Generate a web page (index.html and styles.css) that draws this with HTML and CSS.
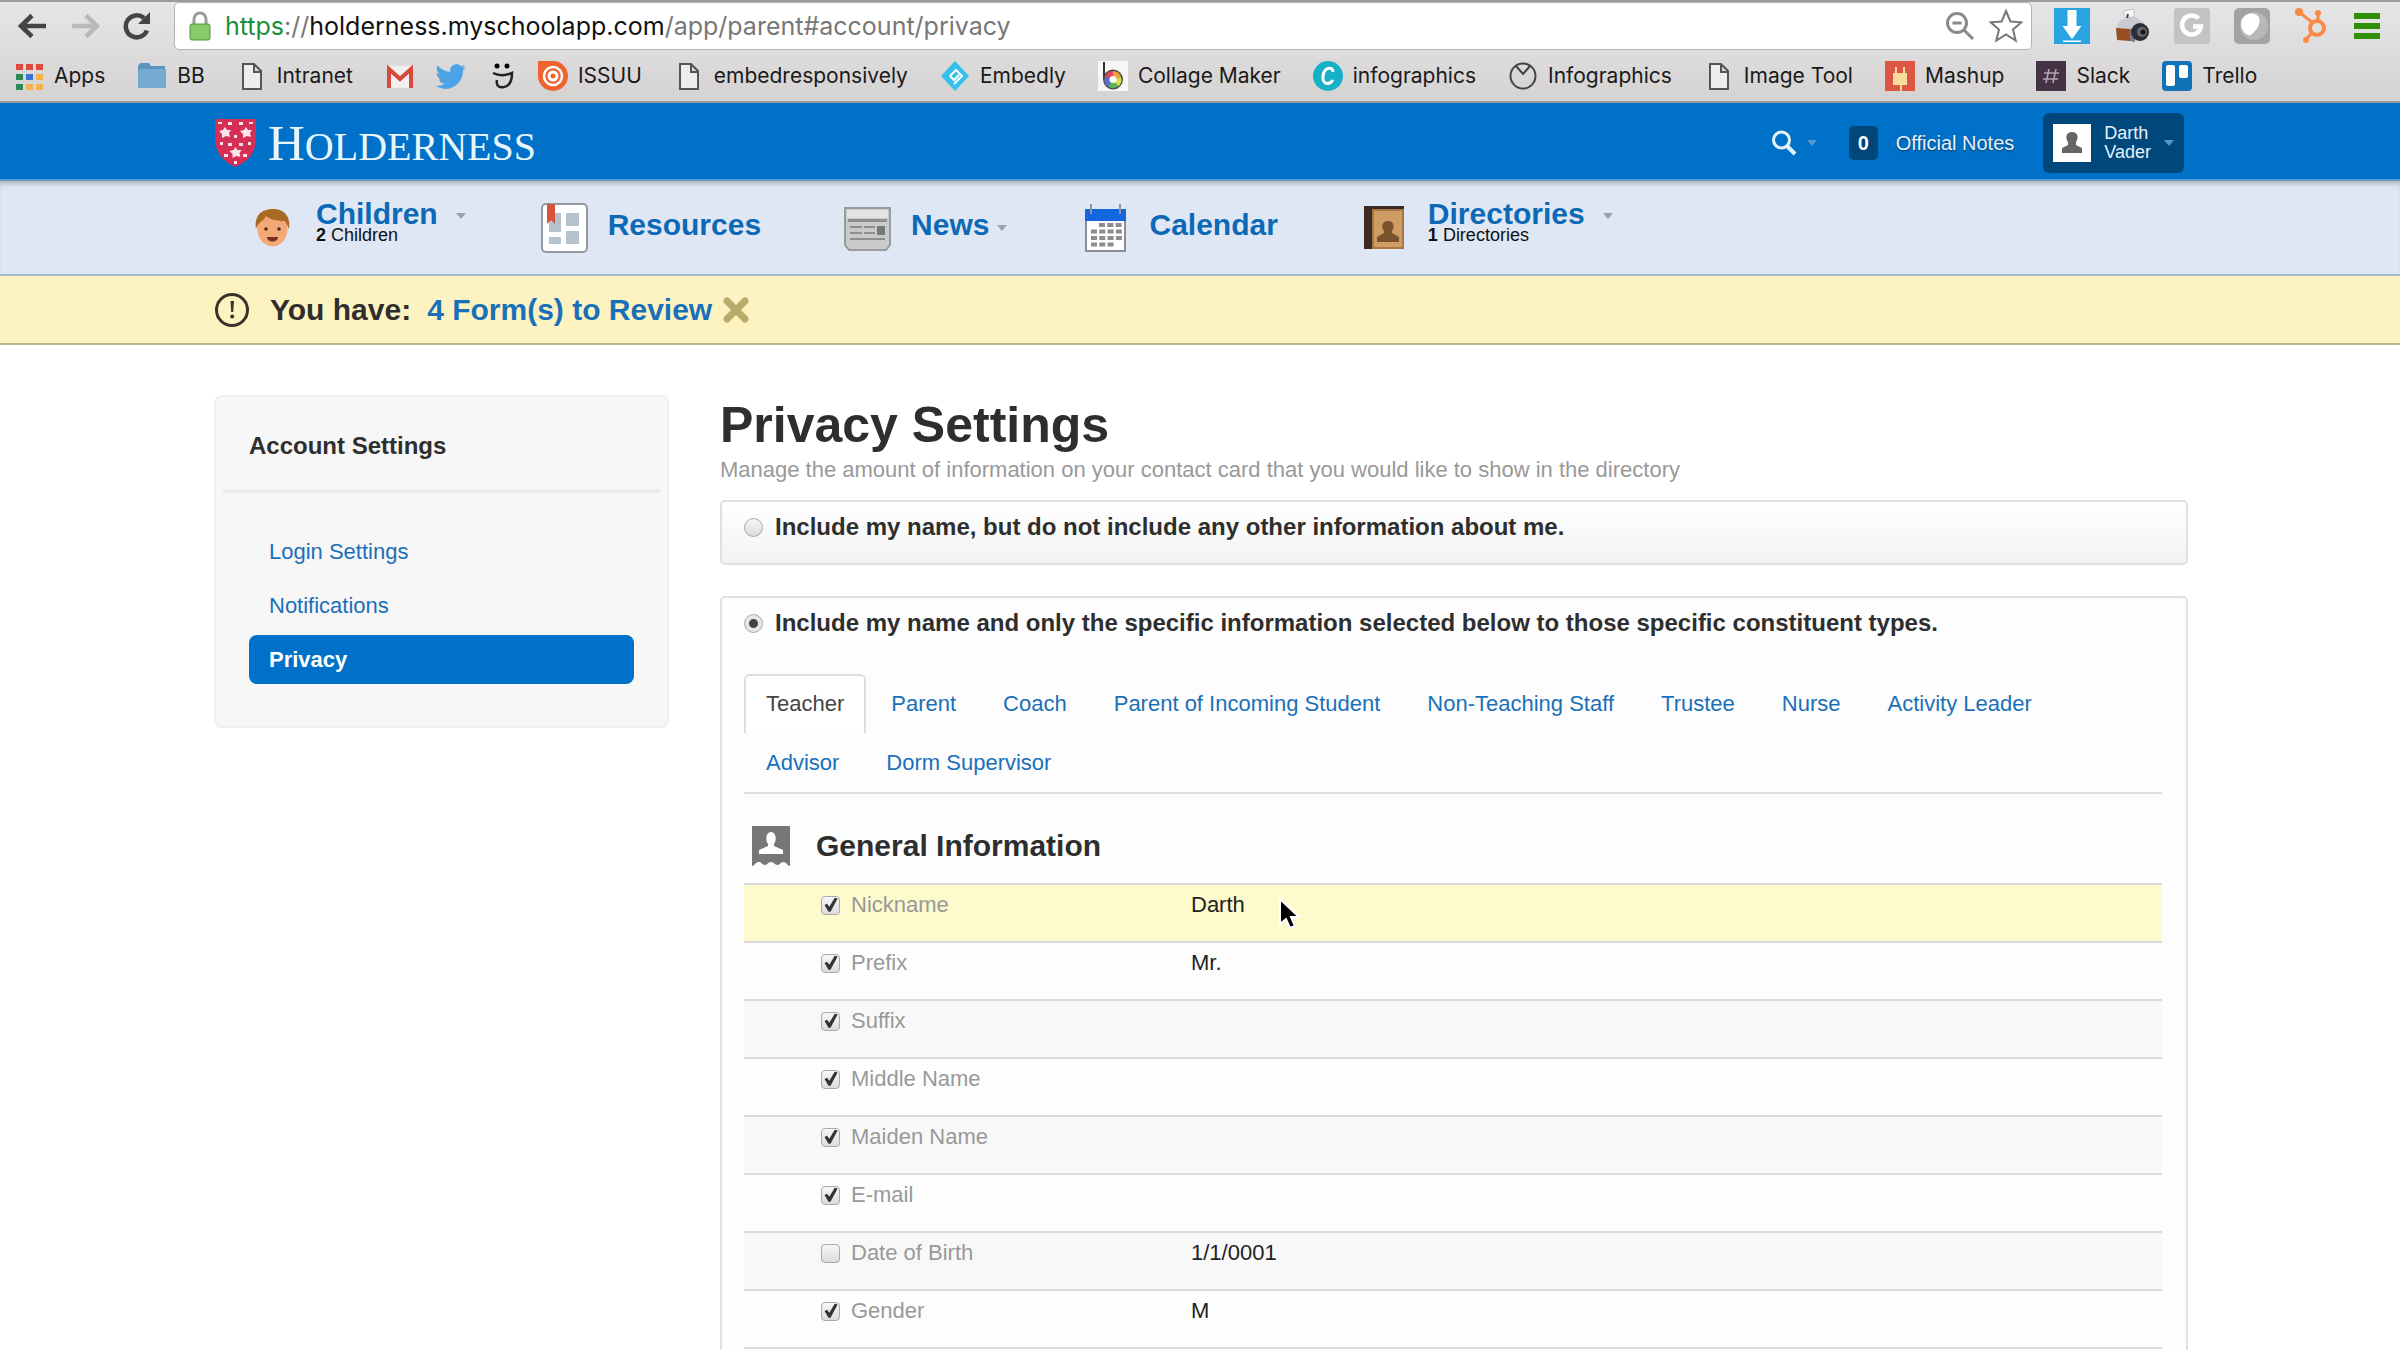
FILE: index.html
```html
<!DOCTYPE html>
<html lang="en">
<head>
<meta charset="utf-8">
<title>Privacy Settings</title>
<link rel="stylesheet" href="styles.css">
</head>
<body>
<div class="browser">
  <div class="toolbar">
    <button class="tool" aria-label="Back"><svg width="30" height="26" viewBox="0 0 30 26"><path d="M28 13H4M14 2.500L3 13l11 10.500" fill="none" stroke="#444" stroke-width="4.500"/></svg></button>
    <button class="tool" aria-label="Forward"><svg width="30" height="26" viewBox="0 0 30 26"><path d="M2 13h24M16 2.500L27 13 16 23.500" fill="none" stroke="#b9b9b9" stroke-width="4.500"/></svg></button>
    <button class="tool" aria-label="Reload"><svg width="30" height="28" viewBox="0 0 30 28"><path d="M25 18.500A11 11 0 1 1 22 6" fill="none" stroke="#444" stroke-width="4.500"/><path d="M28 0v12H16z" fill="#444"/></svg></button>
    <div class="address">
      <svg width="22" height="30" viewBox="0 0 22 30"><path d="M5 14V8a6 6 0 0 1 12 0v6" fill="none" stroke="#999" stroke-width="3"/><rect x="1" y="13" width="20" height="16" rx="2" fill="#86cb6c" stroke="#4f9440"/></svg>
      <a class="url" href="#account"><span class="scheme">https</span>://<span class="host">holderness.myschoolapp.com</span>/app/parent#account/privacy</a>
      <svg width="30" height="30" viewBox="0 0 30 30"><circle cx="12" cy="12" r="9.500" fill="none" stroke="#8a8a8a" stroke-width="3"/><path d="M7.500 12h9M19 19l9 9" stroke="#8a8a8a" stroke-width="3"/></svg>
      <svg width="34" height="34" viewBox="0 0 34 34"><path d="M17 2l4.400 10.500 11 .8-8.400 7.200 2.700 11L17 25.500 7.300 31.500l2.700-11L1.600 13.300l11-.8z" fill="#fff" stroke="#777" stroke-width="2"/></svg>
    </div>
    <div class="extensions">
      <svg width="36" height="36" viewBox="0 0 36 36"><path d="M0 0h36v36H0z" fill="#2aa4e0"/><path d="M13.500 2h9v16h5L18 31 8.500 18h5zM9 32.500h18V34H9z" fill="#fff"/></svg>
      <svg width="36" height="36" viewBox="0 0 36 36"><path d="M9 3l11-2v8l-9 1z" fill="#f6f6f6" stroke="#c4c4c4"/><path d="M13 10l1-4" stroke="#445" stroke-width="2"/><path d="M2 20l4-8 15-3 9 6v12H2z" fill="#c9cbd2"/><path d="M2 20l14 1v12L3 32z" fill="#9a4f22"/><path d="M16 21h5v13l-5-1z" fill="#7a7d86"/><circle cx="26" cy="24" r="9" fill="#2d2d33"/><circle cx="28" cy="24" r="5" fill="#66686f"/><circle cx="29" cy="24" r="2.500" fill="#16161a"/></svg>
      <svg width="36" height="36" viewBox="0 0 36 36"><rect width="36" height="36" rx="3" fill="#c3c3c3"/><path d="M24.500 10.500A9.500 9.500 0 1 0 27 18.500h-8" fill="none" stroke="#fff" stroke-width="4.500"/></svg>
      <svg width="36" height="36" viewBox="0 0 36 36"><rect width="36" height="36" rx="5" fill="#a3a3a3"/><circle cx="20" cy="18" r="14" fill="#b8b8b8"/><path d="M8 11c5-7 13-7 17-2 2 7-2 13-8 18-3 1-6-1-8-4-2-4-3-8-1-12z" fill="#fff"/></svg>
      <svg width="36" height="36" viewBox="0 0 36 36"><g fill="none" stroke="#f78b45" stroke-width="3"><circle cx="23" cy="20" r="7" stroke-width="4"/><path d="M5 4l14 11M24 5v9M18 25l-6 6"/></g><g fill="#f78b45"><circle cx="5" cy="4" r="4"/><circle cx="24" cy="5" r="3"/><circle cx="12" cy="32" r="3"/></g></svg>
      <svg width="26" height="26" viewBox="0 0 26 26"><path d="M0 0h26v6H0zM0 10h26v6H0zM0 20h26v6H0z" fill="#2f8f06"/></svg>
    </div>
  </div>
  <nav class="bookmarks" aria-label="Bookmarks">
    <a href="#apps"><svg width="30" height="30" viewBox="0 0 30 30"><path fill="#e04a3f" d="M2 3h7v6H2zM12 3h7v6h-7zM22 3h7v6h-7z"/><path fill="#2f8a5b" d="M2 13h7v6H2zM2 23h7v6H2z"/><path fill="#3577d4" d="M12 13h7v6h-7z"/><path fill="#f3b24a" d="M22 13h7v6h-7zM12 23h7v6h-7zM22 23h7v6h-7z"/></svg><span>Apps</span></a>
    <a href="#bb"><svg width="30" height="30" viewBox="0 0 30 30"><path d="M1 5l2-3h9l2 3h14v22H1z" fill="#5b94c0"/><path d="M1 8h28v19H1z" fill="#76a9d0"/></svg><span>BB</span></a>
    <a href="#intranet"><svg width="30" height="30" viewBox="-3 0 30 30"><path d="M3 3h11l7 7v18H3zM14 3v8h7" fill="#eee" stroke="#555" stroke-width="2"/></svg><span>Intranet</span></a>
    <a href="#gmail" aria-label="Gmail"><svg width="30" height="30" viewBox="0 0 30 30"><path d="M3 5h24v22H3z" fill="#f2f0ef"/><path d="M4 27V8l11 10L26 8v19" fill="none" stroke="#d54a3c" stroke-width="4"/></svg></a>
    <a href="#twitter" aria-label="Twitter"><svg width="30" height="30" viewBox="0 0 24 24"><path fill="#4ea3e6" d="M23.600 4.900a9.700 9.700 0 0 1-2.800.8 4.900 4.900 0 0 0 2.200-2.700 9.900 9.900 0 0 1-3.100 1.200 4.900 4.900 0 0 0-8.400 4.500A14 14 0 0 1 1.300 3.600a4.900 4.900 0 0 0 1.500 6.600A4.900 4.900 0 0 1 .6 9.600a4.900 4.900 0 0 0 3.900 4.900 4.900 4.900 0 0 1-2.200.1 4.900 4.900 0 0 0 4.600 3.400A9.900 9.900 0 0 1 0 20a14 14 0 0 0 21.500-12.400 10 10 0 0 0 2.100-2.700z"/></svg></a>
    <a href="#face" aria-label="Bitmoji"><svg width="30" height="30" viewBox="0 0 30 30"><circle cx="10" cy="5" r="2.500"/><circle cx="20" cy="5" r="2.500"/><path d="M6 12c6 3 12 3 19 0 0 8-3 13-8 14-6 1-8-2-7-7" fill="none" stroke="#222" stroke-width="2.500"/></svg></a>
    <a href="#issuu"><svg width="30" height="30" viewBox="0 0 30 30"><path d="M0 0h15a15 15 0 1 1-15 15z" fill="#ee6330"/><circle cx="15" cy="15" r="9" fill="none" stroke="#fff" stroke-width="2.500"/><circle cx="15" cy="15" r="4" fill="none" stroke="#fff" stroke-width="3"/></svg><span>ISSUU</span></a>
    <a href="#embedresponsively"><svg width="30" height="30" viewBox="-3 0 30 30"><path d="M3 3h11l7 7v18H3zM14 3v8h7" fill="#eee" stroke="#555" stroke-width="2"/></svg><span>embedresponsively</span></a>
    <a href="#embedly"><svg width="30" height="30" viewBox="0 0 30 30"><path d="M15 0l14 15-14 15L1 15z" fill="#35c0ec"/><path d="M10 15l6-6 6 6-8 8M10 15l4 4 5-5" fill="none" stroke="#fff" stroke-width="2"/></svg><span>Embedly</span></a>
    <a href="#collage"><svg width="30" height="30" viewBox="0 0 30 30"><path d="M0 0h30v30H0z" fill="#f6f6f6"/><path d="M6 1v18" stroke="#333" stroke-width="2"/><circle cx="15" cy="18.500" r="10" fill="#4a4a4a"/><path d="M15 18.500V10a8.500 8.500 0 0 1 8 6z" fill="#f3a33a"/><path d="M15 18.500l8-2.500a8.500 8.500 0 0 1-3 9.500z" fill="#d9df4c"/><path d="M15 18.500l5 7a8.500 8.500 0 0 1-10 0z" fill="#59b458"/><path d="M15 18.500l-5 7a8.500 8.500 0 0 1-3-9.500z" fill="#5c6fd6"/><path d="M15 18.500L7 16a8.500 8.500 0 0 1 8-6z" fill="#e0475a"/><circle cx="15" cy="18.500" r="3.500" fill="#fff"/></svg><span>Collage Maker</span></a>
    <a href="#infographics"><svg width="30" height="30" viewBox="0 0 30 30"><circle cx="15" cy="15" r="15" fill="#16b1c6"/><path d="M20 11c0-6-9-5-10 4-1 8 6 10 10 4" fill="none" stroke="#fff" stroke-width="3"/></svg><span>infographics</span></a>
    <a href="#infographics2"><svg width="30" height="30" viewBox="0 0 30 30"><circle cx="15" cy="15" r="12.500" fill="none" stroke="#444" stroke-width="2"/><path d="M8 5l7 8 7-8" fill="none" stroke="#444" stroke-width="2"/></svg><span>Infographics</span></a>
    <a href="#imagetool"><svg width="30" height="30" viewBox="-3 0 30 30"><path d="M3 3h11l7 7v18H3zM14 3v8h7" fill="#eee" stroke="#555" stroke-width="2"/></svg><span>Image Tool</span></a>
    <a href="#mashup"><svg width="30" height="30" viewBox="0 0 30 30"><path d="M0 0h30v30H0z" fill="#dd5644"/><path d="M10 6h2v6h6V6h2v6h2v12h-5v6h-2v-6H8V12h2z" fill="#f8dc9b"/></svg><span>Mashup</span></a>
    <a href="#slack"><svg width="30" height="30" viewBox="0 0 30 30"><path d="M0 0h30v30H0z" fill="#453345"/><path d="M13 8l-3 14M20 8l-3 14M8 12h15M7 18h15" stroke="#b3a5b3" stroke-width="1.500"/></svg><span>Slack</span></a>
    <a href="#trello"><svg width="30" height="30" viewBox="0 0 30 30"><rect width="30" height="30" rx="4" fill="#1272b8"/><rect x="4" y="4" width="9" height="21" rx="2" fill="#fff"/><rect x="17" y="4" width="9" height="13" rx="2" fill="#fff"/></svg><span>Trello</span></a>
  </nav>
</div>

<div class="page">
  <header class="masthead">
    <a class="logo" href="#home" aria-label="Holderness home">
      <svg width="43" height="50" viewBox="0 0 43 50"><path d="M1 1h41v20c0 14-9 23-20.500 28C10 44 1 35 1 21z" fill="#d62f55"/><g fill="#fbe3ea"><path id="f" d="M11 9l2 3 4 0-2 3 1 4-4-1-4 2 0-4-3-3 4-1z"/><use href="#f" x="21"/><use href="#f" x="10.500" y="20"/><path d="M4 4h4v2H4zM14 4h4v3h-4zM25 4h4v3h-4zM35 4h4v2h-4zM20 17h3v3h-3zM6 24h3v3H6zM14 25h4v3h-4zM25 25h4v3h-4zM34 24h3v3h-3zM10 36h4v3h-4zM29 36h4v3h-4zM20 43h3v3h-3z"/></g></svg>
      <span class="wordmark">H<small>OLDERNESS</small></span>
    </a>
    <div class="tools">
      <button class="search" aria-label="Search"><svg width="26" height="26" viewBox="0 0 26 26"><circle cx="10.500" cy="10" r="8" fill="none" stroke="#e6f2fb" stroke-width="3"/><path d="M16 16l8 8" stroke="#e6f2fb" stroke-width="4"/></svg><i class="caret light"></i></button>
      <a class="notes" href="#notes"><b>0</b>Official Notes</a>
      <button class="user"><svg width="38" height="38" viewBox="0 0 38 38"><path d="M0 0h38v38H0z" fill="#fff"/><path d="M9 29v-5l6-3v-3c-3-4-2-10 4-10s7 6 4 10v3l6 3v5z" fill="#666"/></svg><span>Darth<br>Vader</span><i class="caret light"></i></button>
    </div>
  </header>

  <nav class="mainnav" aria-label="Main">
    <a href="#children"><svg width="47" height="50" viewBox="0 0 47 50"><ellipse cx="23.500" cy="26" rx="15" ry="17.500" fill="#f4a878"/><path d="M7 26C5 12 13 6 24 6s18 7 16 20l-4-8c-8 0-16-2-19-5-2 5-8 6-10 13z" fill="#a86a23"/><circle cx="17" cy="26" r="1.800" fill="#4a2c1a"/><circle cx="30" cy="26" r="1.800" fill="#4a2c1a"/><path d="M18 34h11c0 6-11 6-11 0z" fill="#7a3020"/></svg><span class="stack">Children<small><b>2</b> Children</small></span><i class="caret far"></i></a>
    <a href="#resources"><svg width="47" height="50" viewBox="0 0 47 50"><rect x="1" y="1" width="45" height="48" rx="4" fill="#fff" stroke="#9199a1" stroke-width="2"/><path d="M8 10h12v19H8zM25 10h13v13H25zM8 34h12v7H8zM25 28h13v13H25z" fill="#b4c2cc"/><path d="M6 1h8v20l-4-4-4 4z" fill="#d9533a"/></svg><span class="single">Resources</span></a>
    <a href="#news"><svg width="47" height="50" viewBox="0 0 47 50"><path d="M1 5h45v37l-4 5H5l-4-5z" fill="#c9cacb" stroke="#9a9b9c" stroke-width="2"/><path d="M3 7h41v8H3z" fill="#e3e3e3"/><path d="M4 16h39v3H4zM6 23h12v2H6zM20 23h11v2H20zM6 29h12v2H6zM20 29h11v2H20zM6 35h35v2H6z" fill="#8d8e8f"/><path d="M33 23h8v9h-8z" fill="#77797a"/></svg><span class="single">News</span><i class="caret"></i></a>
    <a href="#calendar"><svg width="47" height="50" viewBox="0 0 47 50"><path d="M4 8h39v40H4z" fill="#fff" stroke="#8b8f95" stroke-width="2"/><path d="M3 6h41v12H3z" fill="#1267e0"/><path d="M9 1v10M38 1v10" stroke="#8d949c" stroke-width="2"/><path d="M17 22h23M9 28.500h31M9 35h31M9 41.500h23" stroke="#8c8d90" stroke-width="4" stroke-dasharray="6 2.300"/></svg><span class="single">Calendar</span></a>
    <a href="#directories"><svg width="47" height="50" viewBox="0 0 47 50"><path d="M3 3h40v43H3z" fill="#3c2b22"/><path d="M11 6h32v40H11z" fill="#cf9c64"/><path d="M12 7h30v38H12z" fill="none" stroke="#a87743" stroke-width="2"/><path d="M16 39v-5l7-4v-2c-3-4-2-10 4-10s7 6 4 10v2l7 4v5z" fill="#77522d"/></svg><span class="stack">Directories<small><b>1</b> Directories</small></span><i class="caret far"></i></a>
  </nav>

  <div class="notice" role="status">
    <svg width="36" height="36" viewBox="0 0 36 36"><circle cx="18" cy="18" r="15.500" fill="none" stroke="#38342a" stroke-width="3"/><path d="M16.500 9h3.500l-.8 11h-2z" fill="#38342a"/><circle cx="18.200" cy="24.500" r="2" fill="#38342a"/></svg>
    <span>You have:</span>
    <a href="#forms">4 Form(s) to Review</a>
    <button aria-label="Dismiss"><svg width="28" height="28" viewBox="0 0 28 28"><path d="M5 5l18 18M23 5L5 23" stroke="#b7aa6a" stroke-width="7" stroke-linecap="round"/></svg></button>
  </div>

  <div class="content">
    <aside class="sidebar">
      <h2>Account Settings</h2>
      <ul>
        <li><a href="#login">Login Settings</a></li>
        <li><a href="#notifications">Notifications</a></li>
        <li><a class="current" href="#privacy" aria-current="page">Privacy</a></li>
      </ul>
    </aside>
    <main>
      <h1>Privacy Settings</h1>
      <p class="lead">Manage the amount of information on your contact card that you would like to show in the directory</p>
      <section class="box shaded">
        <label class="choice"><input type="radio" name="privacy">Include my name, but do not include any other information about me.</label>
      </section>
      <section class="box">
        <label class="choice"><input type="radio" name="privacy" checked>Include my name and only the specific information selected below to those specific constituent types.</label>
        <nav class="tabs" aria-label="Constituent types">
          <a class="active" href="#teacher">Teacher</a><a href="#parent">Parent</a><a href="#coach">Coach</a><a href="#incoming">Parent of Incoming Student</a><a href="#staff">Non-Teaching Staff</a><a href="#trustee">Trustee</a><a href="#nurse">Nurse</a><a href="#leader">Activity Leader</a><a href="#advisor">Advisor</a><a href="#dorm">Dorm Supervisor</a>
        </nav>
        <h3><svg width="38" height="40" viewBox="0 0 38 40"><path d="M0 0h38v40c-3 0-3-4-6.500-4s-3 3-6 3-3-3-6.500-3-3 3-6 3-3-3-6.500-3S3 40 0 40z" fill="#777"/><path d="M7 28v-4l9-4v-2c-3-4-2-12 3-12s6 8 3 12v2l9 4v4z" fill="#fff"/></svg>General Information</h3>
        <table>
          <tbody>
            <tr class="hover"><td><label><input type="checkbox" checked>Nickname</label></td><td class="pointed">Darth<svg class="pointer" width="24" height="34" viewBox="0 0 24 34"><path d="M2 2v25l6-5 4 9 5-2-4-9h8z" fill="#000" stroke="#fff" stroke-width="2"/></svg></td></tr>
            <tr><td><label><input type="checkbox" checked>Prefix</label></td><td>Mr.</td></tr>
            <tr><td><label><input type="checkbox" checked>Suffix</label></td><td></td></tr>
            <tr><td><label><input type="checkbox" checked>Middle Name</label></td><td></td></tr>
            <tr><td><label><input type="checkbox" checked>Maiden Name</label></td><td></td></tr>
            <tr><td><label><input type="checkbox" checked>E-mail</label></td><td></td></tr>
            <tr><td><label><input type="checkbox">Date of Birth</label></td><td>1/1/0001</td></tr>
            <tr><td><label><input type="checkbox" checked>Gender</label></td><td>M</td></tr>
          </tbody>
        </table>
      </section>
    </main>
  </div>
</div>
</body>
</html>
```
FILE: styles.css
```css
* { box-sizing: border-box; }

body {
  margin: 0;
  height: 100vh;
  display: flex;
  flex-direction: column;
  overflow: hidden;
  background: #fff;
  color: #2e2e2e;
  font: 22px/30px "Liberation Sans", Arial, sans-serif;
}

a { color: #1a70b8; text-decoration: none; }
button { border: 0; padding: 0; margin: 0; background: none; font: inherit; color: inherit; }
svg { display: block; flex: none; }

/* Browser frame */
.browser {
  flex: none;
  background: linear-gradient(#e6e6e6, #d5d2d2);
  border-top: 2px solid #9c9c9c;
  border-bottom: 2px solid #9b9b9b;
  font-family: Inter, "Noto Sans", sans-serif;
}
.toolbar { display: flex; align-items: center; height: 48px; padding: 0 20px 0 18px; gap: 22px; }
.tool { flex: none; }
.address {
  flex: 1;
  display: flex;
  align-items: center;
  gap: 14px;
  height: 48px;
  padding: 0 8px 0 14px;
  background: #fff;
  border: 1px solid #b5b5b5;
  border-radius: 5px;
}
.url { flex: 1; font-size: 25px; color: #777; }
.scheme { color: #1c8f3a; }
.host { color: #111; }
.extensions { display: flex; align-items: center; gap: 24px; }
.bookmarks { display: flex; align-items: center; height: 51px; padding: 0 14px; gap: 21px; }
.bookmarks a { display: flex; align-items: center; gap: 10px; color: #1a1a1a; font-size: 21px; white-space: nowrap; }
.bookmarks span { padding-right: 11px; }

/* Site header */
.page { flex: 1; min-height: 0; overflow: hidden; }
.masthead {
  display: flex;
  align-items: center;
  justify-content: space-between;
  height: 78px;
  padding: 3px 216px 0 214px;
  background: #0071c8;
  border-bottom: 2px solid #5c9bcb;
}
.logo { display: flex; align-items: center; gap: 11px; color: #e8f6fb; }
.wordmark { padding-top: 4px; font: 51px/60px "Liberation Serif", "Times New Roman", serif; }
.wordmark small { font-size: 40px; }
.tools { display: flex; align-items: center; color: #e6f2fb; font-size: 20px; text-shadow: 0 1px 2px #003a68; }
.search { display: flex; align-items: center; gap: 10px; margin-right: 32px; }
.notes { display: flex; align-items: center; gap: 18px; margin-right: 29px; color: #e6f2fb; }
.notes b { width: 29px; border-radius: 5px; background: #00477b; text-align: center; line-height: 34px; color: #fff; }
.user {
  display: flex;
  align-items: center;
  gap: 13px;
  height: 60px;
  padding: 0 10px;
  border-radius: 6px;
  background: #00477b;
  text-align: left;
  font-size: 18px;
  line-height: 19px;
}
.caret { flex: none; border: 5px solid transparent; border-top: 6px solid #9aa3ad; border-bottom: 0; }
.light { border-top-color: #5599cc; }

/* Main navigation */
.mainnav {
  display: flex;
  height: 95px;
  padding: 22px 249px 0;
  gap: 75px;
  background: #dfe7f4;
  border-bottom: 2px solid #a9bccb;
  box-shadow: inset 0 5px 4px -2px #b4b7c0;
}
.mainnav a { display: flex; align-items: center; height: 50px; color: #0d69b6; font-size: 30px; font-weight: bold; }
.mainnav svg { margin-right: 20px; }
.mainnav .far { margin-left: 18px; margin-bottom: 24px; }
.single { padding: 0 8px 6px 0; }
.stack { display: flex; flex-direction: column; line-height: 26px; margin-bottom: 11px; }
.stack small { color: #111; font-size: 18px; font-weight: normal; line-height: 17px; }

.notice {
  display: flex;
  align-items: center;
  height: 69px;
  padding: 0 214px;
  background: #fdf3c1;
  border-bottom: 2px solid #bdb78f;
  font-size: 30px;
  font-weight: bold;
}
.notice span { margin: 0 16px 0 20px; }
.notice a { margin-right: 10px; }

/* Body columns */
.content { display: grid; grid-template-columns: 455px 1fr; gap: 51px; padding: 50px 212px 0 214px; align-items: start; }
.sidebar { border: 2px solid #efefef; border-radius: 8px; background: #f7f7f7; padding: 0 7px 42px; }
.sidebar h2 { margin: 0; padding: 34px 26px 28px; border-bottom: 4px solid #ececec; font-size: 24px; line-height: 30px; }
.sidebar ul { display: grid; gap: 5px; margin: 0; padding: 34px 26px 0; list-style: none; }
.sidebar li a { display: block; padding: 0 20px; border-radius: 8px; line-height: 49px; }
.sidebar .current { background: #0071c8; color: #fff; font-weight: bold; }

h1 { margin: 0; font-size: 50px; line-height: 60px; }
.lead { margin: 0 0 15px; color: #999; }
.box { border: 2px solid #e0e0e0; border-radius: 5px; padding: 10px 24px 10px 22px; background: #fdfdfd; margin-bottom: 31px; }
.shaded { min-height: 65px; background: linear-gradient(#fff, #f3f3f3); }
.choice { display: flex; align-items: center; gap: 12px; font-size: 24px; font-weight: bold; }

input { appearance: none; flex: none; margin: 0; width: 19px; height: 19px; border: 1px solid #aaa; background: linear-gradient(#f6f6f6, #dcdcdc); }
input[type="radio"] { border-radius: 50%; }
input[type="radio"]:checked { background: radial-gradient(circle, #444 4px, #e6e6e6 5px); }
input[type="checkbox"] { border-radius: 4px; }
input[type="checkbox"]:checked::before {
  content: "";
  display: block;
  width: 17px;
  height: 17px;
  background: #333;
  clip-path: polygon(15% 50%, 30% 42%, 43% 60%, 75% 8%, 92% 12%, 50% 90%, 38% 90%);
}

.tabs { display: flex; flex-wrap: wrap; gap: 0 3px; margin-top: 36px; border-bottom: 2px solid #ddd; }
.tabs a { height: 59px; padding: 13px 20px 0; border: 2px solid transparent; border-bottom: 0; border-radius: 6px 6px 0 0; }
.tabs .active { border-color: #ddd; background: #fff; color: #444; }

h3 { display: flex; align-items: center; gap: 26px; margin: 32px 0 17px; padding-left: 8px; font-size: 30px; line-height: 40px; }
table { width: 100%; border-collapse: collapse; table-layout: fixed; }
tr { height: 58px; border-top: 2px solid #dcdcdc; }
tr:last-child { border-bottom: 2px solid #dcdcdc; }
tr:nth-child(odd) { background: #f8f8f8; }
tr.hover { background: #fdfacd; }
td { vertical-align: top; padding: 5px 0 0; color: #222; }
td:first-child { width: 447px; padding-left: 77px; color: #999; }
td label { display: flex; align-items: center; gap: 11px; }
.pointed { position: relative; }
.pointer { position: absolute; left: 87px; top: 12px; }
```
